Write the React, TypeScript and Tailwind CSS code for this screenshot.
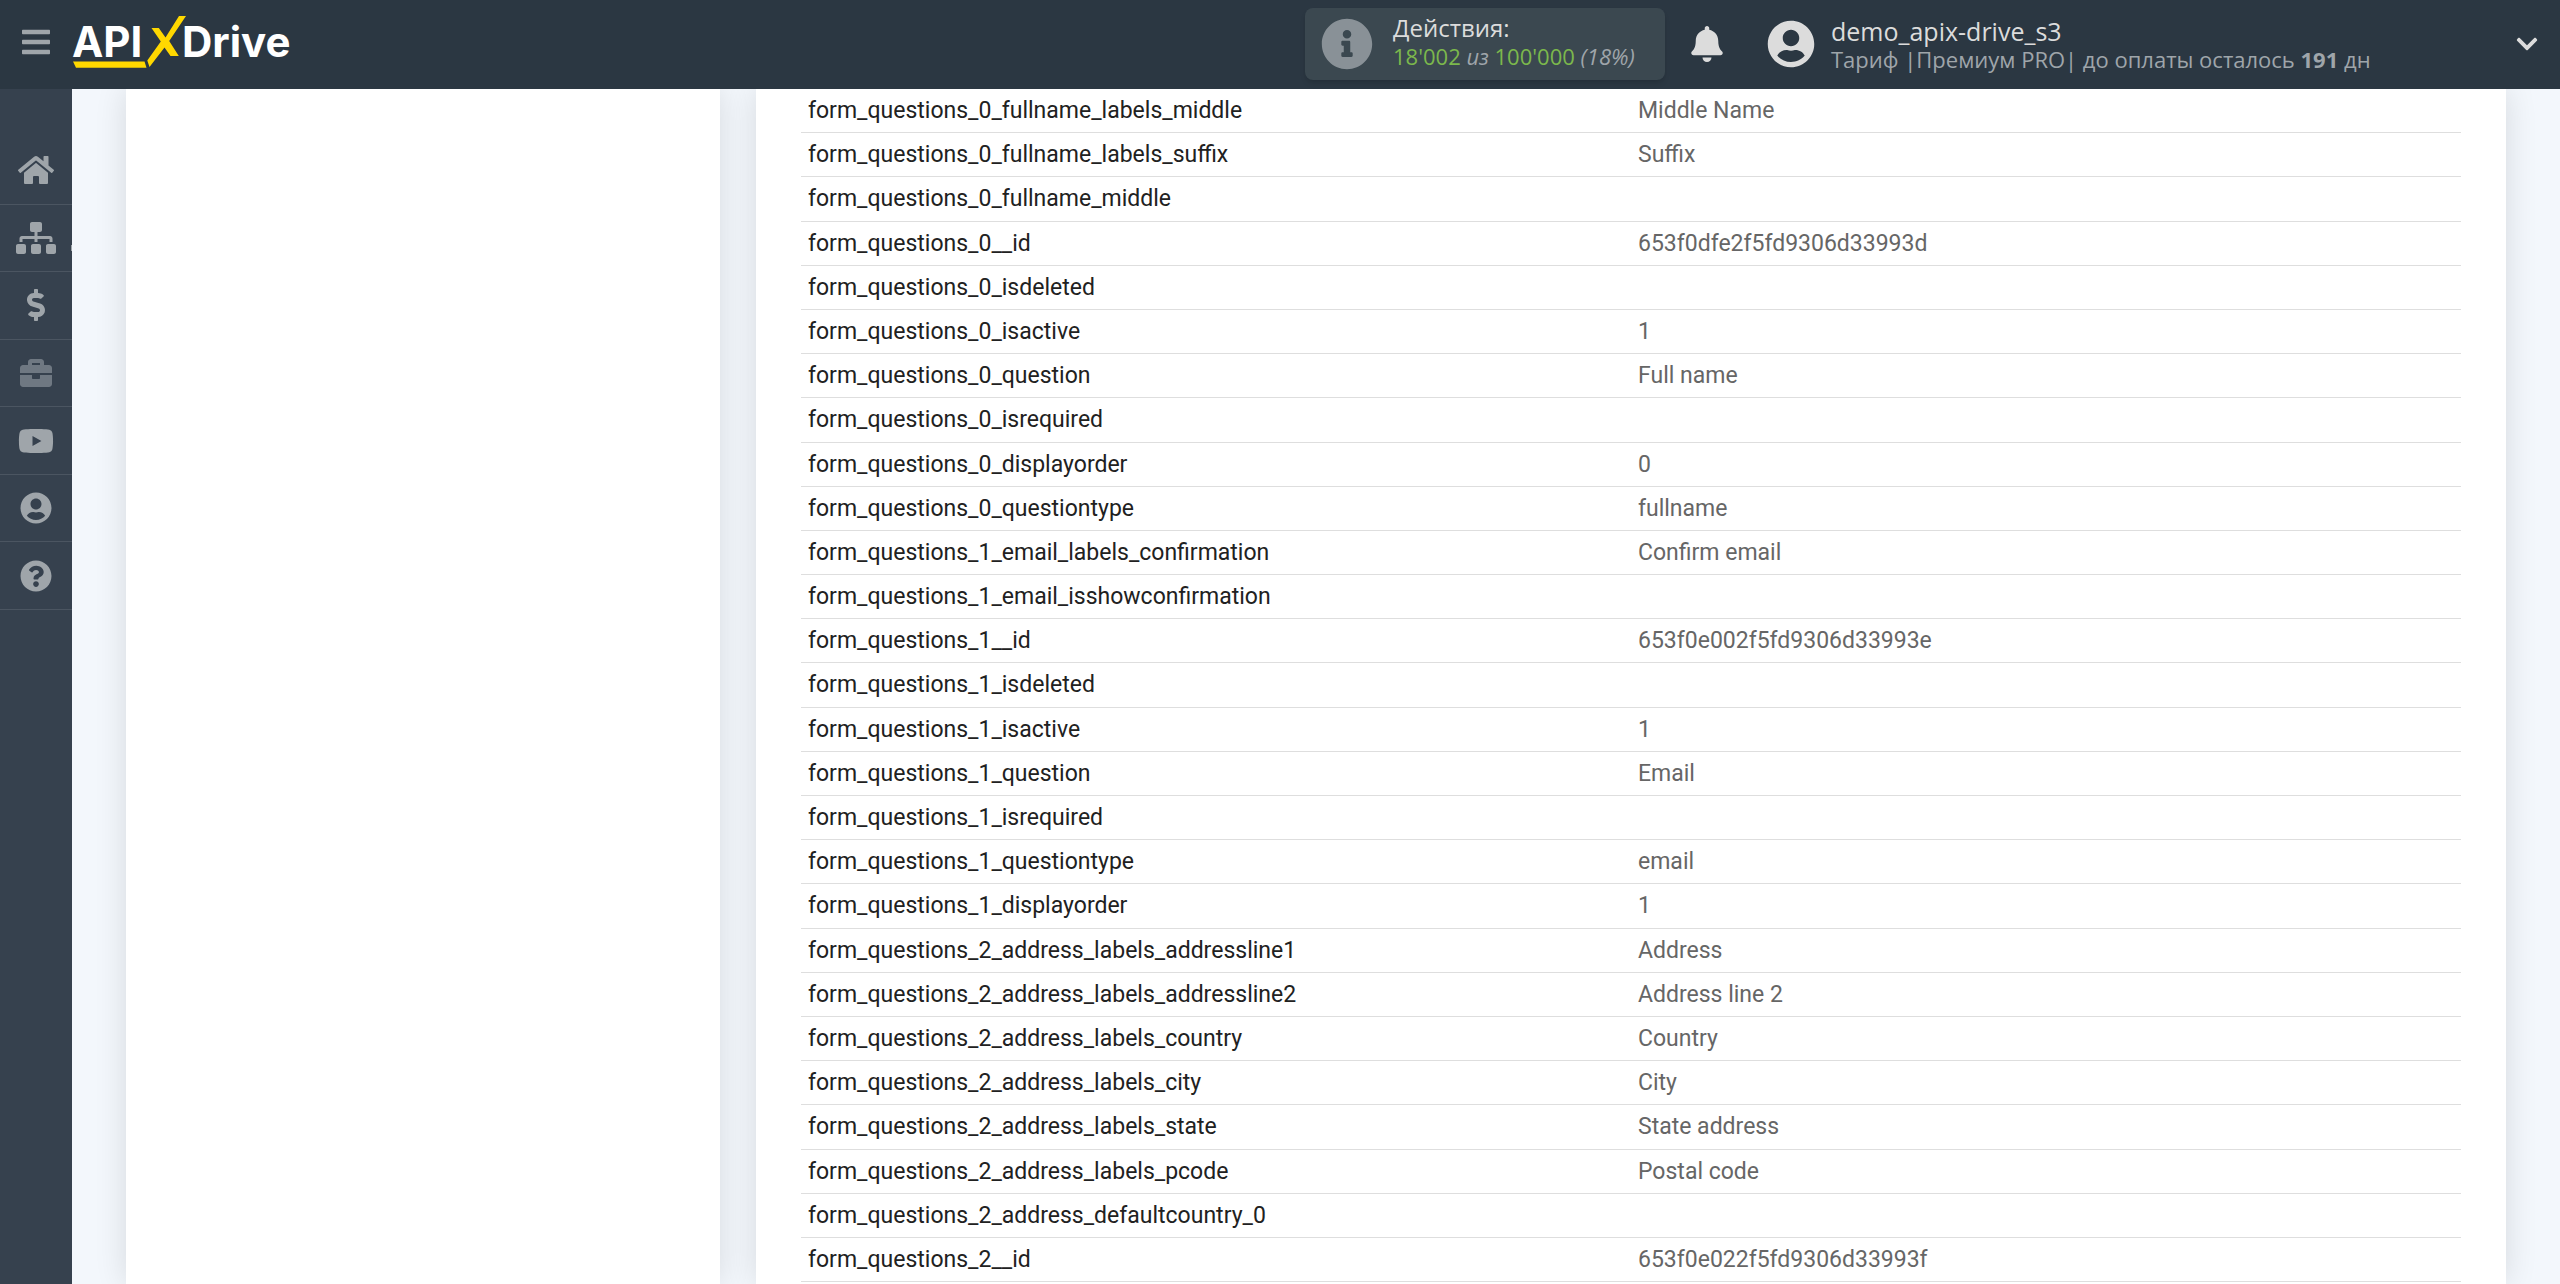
import {
  FaBars,
  FaBell,
  FaBriefcase,
  FaChevronDown,
  FaDollarSign,
  FaHome,
  FaInfoCircle,
  FaQuestionCircle,
  FaSitemap,
  FaUserCircle,
  FaYoutube,
} from 'react-icons/fa';

const rows: [string, string][] = [
  ['form_questions_0_fullname_labels_middle', 'Middle Name'],
  ['form_questions_0_fullname_labels_suffix', 'Suffix'],
  ['form_questions_0_fullname_middle', ''],
  ['form_questions_0__id', '653f0dfe2f5fd9306d33993d'],
  ['form_questions_0_isdeleted', ''],
  ['form_questions_0_isactive', '1'],
  ['form_questions_0_question', 'Full name'],
  ['form_questions_0_isrequired', ''],
  ['form_questions_0_displayorder', '0'],
  ['form_questions_0_questiontype', 'fullname'],
  ['form_questions_1_email_labels_confirmation', 'Confirm email'],
  ['form_questions_1_email_isshowconfirmation', ''],
  ['form_questions_1__id', '653f0e002f5fd9306d33993e'],
  ['form_questions_1_isdeleted', ''],
  ['form_questions_1_isactive', '1'],
  ['form_questions_1_question', 'Email'],
  ['form_questions_1_isrequired', ''],
  ['form_questions_1_questiontype', 'email'],
  ['form_questions_1_displayorder', '1'],
  ['form_questions_2_address_labels_addressline1', 'Address'],
  ['form_questions_2_address_labels_addressline2', 'Address line 2'],
  ['form_questions_2_address_labels_country', 'Country'],
  ['form_questions_2_address_labels_city', 'City'],
  ['form_questions_2_address_labels_state', 'State address'],
  ['form_questions_2_address_labels_pcode', 'Postal code'],
  ['form_questions_2_address_defaultcountry_0', ''],
  ['form_questions_2__id', '653f0e022f5fd9306d33993f'],
];

const navItems = [
  { label: 'Главная', Icon: FaHome, className: 'h-8 w-9 text-[#9fa5aa]' },
  { label: 'Связи', Icon: FaSitemap, className: 'h-8 w-10 text-[#9fa5aa]', submenu: true },
  { label: 'Оплата', Icon: FaDollarSign, className: 'h-8 w-8 text-[#9fa5aa]' },
  { label: 'Проекты', Icon: FaBriefcase, className: 'h-8 w-8 text-[#6f7882]' },
  { label: 'Видео', Icon: FaYoutube, className: 'h-8 w-9 text-[#9fa5aa]' },
  { label: 'Профиль', Icon: FaUserCircle, className: 'h-8 w-8 text-[#9fa5aa]' },
  { label: 'Помощь', Icon: FaQuestionCircle, className: 'h-8 w-8 text-[#9fa5aa]' },
];

function Logo() {
  return (
    <a href="#" aria-label="APIXDrive" className="ml-5 block">
      <svg viewBox="72 16 222 56" className="h-14 w-[222px]">
        <g fill="#ffffff" fontFamily="Inter" fontWeight="700" fontSize="42">
          <text x="72" y="57">API</text>
          <text x="182" y="57">Drive</text>
        </g>
        <g fill="#ffd800">
          <path d="M73 61.500H144.500L146.500 67.800H76Z" />
          <path d="M151.500 28H158.800L165.500 37.500L179 16H186L169.200 41L178.800 56H170.500L164.500 47.500L149.500 67L147.300 60.500L160.800 41.500Z" />
        </g>
      </svg>
    </a>
  );
}

function Header() {
  return (
    <header className="relative z-10 flex h-[89px] shrink-0 items-center bg-[#2b3742] pb-px font-['Open_Sans','Noto_Sans',sans-serif] text-[#dcdcdc]">
      <button type="button" aria-label="Меню" className="mb-1 ml-5 flex w-8 justify-center text-[#9fa5aa]">
        <FaBars className="h-8 w-8" />
      </button>
      <Logo />
      <div className="ml-auto flex h-[72px] w-[360px] items-center rounded-lg bg-[#3b4850] pl-4 shadow-md">
        <FaInfoCircle className="h-[52px] w-[52px] shrink-0 text-[#899197]" />
        <div className="ml-5 pb-1 text-[22px] leading-7 whitespace-nowrap">
          <div className="text-2xl leading-7">Действия:</div>
          <div className="text-[#7cb84c]">
            18'002 <i className="text-[#9fa5aa]">из</i> 100'000 <i className="text-[#9fa5aa]">(18%)</i>
          </div>
        </div>
      </div>
      <button type="button" aria-label="Уведомления" className="ml-6">
        <FaBell className="h-9 w-9" />
      </button>
      <div className="ml-[42px] flex w-[748px] items-center">
        <FaUserCircle className="h-12 w-12 shrink-0" />
        <div className="ml-4 pt-0.5 text-[22px] leading-7 whitespace-nowrap">
          <div className="text-[25px] leading-7">demo_apix-drive_s3</div>
          <div className="text-[#9fa5aa]">
            Тариф |Премиум PRO| до оплаты осталось <b>191</b> дн
          </div>
        </div>
      </div>
      <button type="button" aria-label="Открыть меню профиля" className="mr-[21px]">
        <FaChevronDown className="h-6 w-6" />
      </button>
    </header>
  );
}

function Sidebar() {
  return (
    <aside className="w-[72px] shrink-0 bg-[#36414e] pt-12">
      <nav className="grid h-[473px] grid-rows-7">
        {navItems.map(({ label, Icon, className, submenu }) => (
          <a
            key={label}
            href="#"
            aria-label={label}
            className="relative flex items-center justify-center border-b border-[#4b5561]"
          >
            <Icon className={className} />
            {submenu && <span className="absolute right-0 bottom-5 h-1.5 w-px bg-[#9fa5aa]" />}
          </a>
        ))}
      </nav>
    </aside>
  );
}

export default function App() {
  return (
    <div className="flex h-screen flex-col overflow-hidden bg-[#f3f7fc]">
      <Header />
      <div className="flex min-h-0 flex-1">
        <Sidebar />
        <main className="flex min-w-0 flex-1 gap-9 overflow-hidden px-[54px]">
          <section className="w-[594px] shrink-0 bg-white shadow-[0_0_30px_rgba(0,0,0,0.12)]" />
          <section className="min-w-0 flex-1 bg-white px-[45px] shadow-[0_0_30px_rgba(0,0,0,0.12)]">
            <table className="w-full table-fixed font-[Roboto,sans-serif] text-[23px] leading-[1.53]">
              <tbody>
                {rows.map(([name, value]) => (
                  <tr key={name} className="border-b border-[#dedede]">
                    <td className="px-[7px] py-1 text-[#212121]">{name}</td>
                    <td className="px-[7px] py-1 text-[#666666]">{value}</td>
                  </tr>
                ))}
              </tbody>
            </table>
          </section>
        </main>
      </div>
    </div>
  );
}
